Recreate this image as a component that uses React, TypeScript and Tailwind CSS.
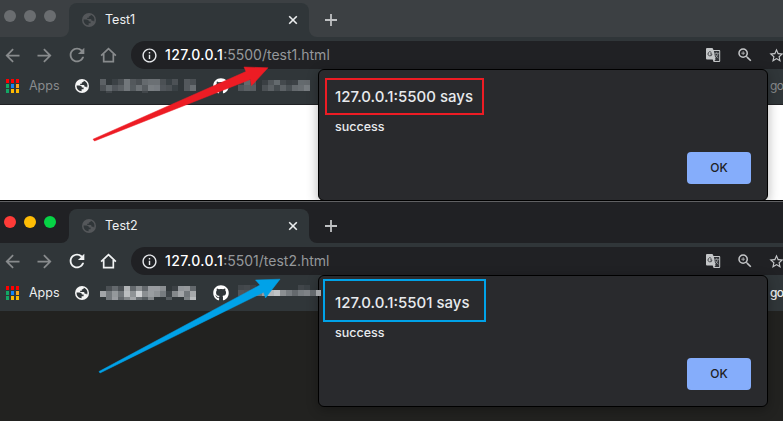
import type { ReactNode } from "react";
import { MdArrowBack, MdArrowForward, MdRefresh, MdInfoOutline, MdZoomIn, MdStarBorder } from "react-icons/md";
import { FaGithub } from "react-icons/fa";

function Globe({ ball, land, size }: { ball: string; land: string; size: number }) {
  return (
    <svg width={size} height={size} viewBox="0 0 14 14" className="shrink-0">
      <circle cx="7" cy="7" r="7" fill={ball} />
      <path d="M1.6 6.6H4.2C6 6.6 6.9 7.4 6.9 8.6H8.6V10.2H6.6V12.2C3.6 12.3 1.4 9.8 1.6 6.6Z" fill={land} />
      <path d="M8.8 1.8C8.8 3 8 3.4 6.8 3.4V4.8H5.2V6H8.6C9.4 6 9.6 6.8 9.6 7.8H11.2C11.8 7.8 11.9 8.4 11.9 9.2C13.3 6.2 12 2.8 8.8 1.8Z" fill={land} />
    </svg>
  );
}

function HomeIcon() {
  return (
    <svg width="17" height="18" viewBox="0 0 18 18" fill="none" stroke="currentColor" strokeWidth="1.8" className="shrink-0">
      <path d="M1.2 9.6 9 2.2l7.8 7.4M3.9 8v8h10.2V8" />
    </svg>
  );
}

function TranslateIcon() {
  return (
    <svg width="15" height="14" viewBox="0 0 15 14" className="shrink-0">
      <path d="M1 0h5.5l1 2H13.2a1 1 0 0 1 1 1v10a1 1 0 0 1-1 1H7.6l-.9-2.6H1a1 1 0 0 1-1-1V1a1 1 0 0 1 1-1Z" fill="#c4c6c8" />
      <path d="M7.9 3h5.3v10H8.4l1.1-1.6Z" fill="#303236" />
      <path d="M8.4 5.3h4.4M10.6 4.3v1M12 5.5c-.4 2-1.6 3.4-3 4.2M9.3 6.5c.6 1.4 1.6 2.5 3.1 3.6" stroke="#a5a7aa" strokeWidth=".8" fill="none" />
      <path d="M5.4 4.4a2 2 0 1 0 .6 1.5H4.1" stroke="#44464a" strokeWidth="1" fill="none" />
    </svg>
  );
}

const APP_COLORS = [
  "bg-[#f00]", "bg-[#f00]", "bg-[#f00]",
  "bg-[#12a765]", "bg-[#1683f5]", "bg-[#fba51b]",
  "bg-[#12a765]", "bg-[#fdb900]", "bg-[#fdb900]",
];

function AppsGrid() {
  return (
    <div className="grid w-[13px] shrink-0 grid-cols-3 gap-x-[2px] gap-y-[1px]">
      {APP_COLORS.map((c, i) => (
        <span key={i} className={`h-[4px] w-[3px] ${c}`} />
      ))}
    </div>
  );
}

type Row = { y: number; h: number; cells: string[] };

function Mosaic({ rows, width }: { rows: Row[]; width: number }) {
  return (
    <svg width={width} height="16" className="block shrink-0 overflow-visible" shapeRendering="crispEdges">
      {rows.map((r) =>
        r.cells.map((c, i) =>
          c === "-" ? null : <rect key={`${r.y}-${i}`} x={i * 6} y={r.y} width={i === 13 && width === 84 ? 5 : 6} height={r.h} fill={`#${c}`} />
        )
      )}
    </svg>
  );
}

const DIM_A: Row[] = [
  { y: 1, h: 6, cells: "5c6165 - 3b4145 4a4f53 72777b 53585c 4a4f53 656a6e 6b7074 6b7074 4b5054 394044 4c5155 - 53585c 4b5054".split(" ") },
  { y: 7, h: 6, cells: "4b5054 646a6e 50555a 5b6064 72777b 555b5f 6c7175 575c60 797e82 767b80 50555a 4b5054 394044 - 54595d 696e72".split(" ") },
  { y: 13, h: 2, cells: "- 41464a - - - - - 41464a - - - - - - - -".split(" ") },
];
const DIM_B: Row[] = [
  { y: 2, h: 5, cells: "3c4145 64696d 50555a - 3a3f43 51565a 646a6e 44494d 3a3f43 3d4246 646a6e 64696d".split(" ") },
  { y: 7, h: 6, cells: "50555a 5b6064 575c60 - 4b5054 5b6064 454b4f 5c6165 494f53 64696d 696e72 777c80".split(" ") },
];
const LIT_A: Row[] = [
  { y: 1, h: 5, cells: "- 4b5054 64696d 4b5054 b1b4b6 64696d 8b8f92 64696d 999ca0 999ca0 8b8f92 - 3c4145 92969a 96999c 64696d".split(" ") },
  { y: 6, h: 6, cells: "a2a5a8 73787c 94989b 72777b bbbec0 8f9396 cfd1d3 8a8e91 9a9ea1 8f9396 777c80 3e4448 84888b a2a5a8 73787c a5a8aa".split(" ") },
  { y: 12, h: 3, cells: "- 73787c 999ca0 62676b 84888b a2a5a8 6b7074 555b5f 84888b - - 555b5f - - 7c8184 b8bbbd".split(" ") },
];
const LIT_B: Row[] = [
  { y: 0, h: 6, cells: "41464a 44494d 3c4145 - - - - - - - 41464a 3b4145 - -".split(" ") },
  { y: 5, h: 6, cells: "50555a 4d5256 64696d 73787c 999ca0 b5b8ba c1c4c6 8b8f92 777c80 64696d 777c80 7e8286 64696d a2a5a8".split(" ") },
];

type WindowProps = {
  active: boolean;
  title: string;
  port: string;
  path: string;
  first: Row[];
  second: Row[];
  children?: ReactNode;
};

function BrowserWindow({ active, title, port, path, first, second, children }: WindowProps) {
  const strip = active ? "h-[41px] bg-[#202124]" : "h-[37px] bg-[#3c4043]";
  const curve = active ? "bg-[#202124]" : "bg-[#3c4043]";
  const dots = active ? ["bg-[#ff3b38]", "bg-[#ffbd05]", "bg-[#06d345]"] : ["bg-[#6a6d70]", "bg-[#6a6d70]", "bg-[#6a6d70]"];
  const dim = "text-[#888b8d]";
  const nav = active ? "text-[#f1f3f4]" : dim;
  return (
    <>
      <div className={`flex shrink-0 items-end ${strip}`}>
        <div className="flex h-[34px] w-[69px] items-start gap-2 pl-1 pt-[7px]">
          {dots.map((d, i) => <span key={i} className={`size-3 rounded-full ${d}`} />)}
        </div>
        <div className="relative flex h-[34px] w-[240px] items-center rounded-t-lg bg-[#303639] pl-[13px] pr-[10px]">
          <span className="absolute -left-2 bottom-0 size-2 bg-[#303639]"><i className={`block size-2 rounded-br-lg ${curve}`} /></span>
          <span className="absolute -right-2 bottom-0 size-2 bg-[#303639]"><i className={`block size-2 rounded-bl-lg ${curve}`} /></span>
          <Globe ball="#54575a" land="#303639" size={14} />
          <span className="ml-[9px] flex-1 text-[12.5px] leading-4 text-[#eef0f1]">{title}</span>
          <svg width="12" height="12" viewBox="0 0 12 12" stroke="#eceeef" strokeWidth="1.6"><path d="m2.2 2.2 7.6 7.6m0-7.6-7.6 7.6" /></svg>
        </div>
        <div className="flex h-[34px] items-center pl-[16px]">
          <svg width="12" height="12" viewBox="0 0 12 12" stroke="#bfc1c3" strokeWidth="1.8"><path d="M6 0v12M0 6h12" /></svg>
        </div>
      </div>
      <div className="flex h-9 shrink-0 items-center bg-[#303639] pl-[2px]">
        <MdArrowBack size={21} className={`shrink-0 ${dim}`} />
        <MdArrowForward size={21} className={`ml-[11px] shrink-0 ${dim}`} />
        <MdRefresh size={22} className={`ml-[11px] shrink-0 ${nav}`} />
        <span className={`ml-[12px] shrink-0 ${nav}`}><HomeIcon /></span>
        <div className="ml-[14px] flex h-7 w-[670px] shrink-0 items-center rounded-l-full bg-[#202124] pl-[10px]">
          <MdInfoOutline size={17} className="shrink-0 text-[#e8eaed]" />
          <p className="ml-[7px] w-[541px] shrink-0 whitespace-nowrap text-[14px] leading-5 text-[#95989b]">
            <span className="font-medium tracking-[0.4px] text-white">127.0.0.1</span>:{port}/{path}
          </p>
          <TranslateIcon />
          <MdZoomIn size={18} className="ml-[15px] shrink-0 text-[#c4c6c8]" />
          <MdStarBorder size={17} className="ml-[14px] shrink-0 text-[#c4c6c8]" />
        </div>
      </div>
      <div className={`flex h-8 shrink-0 items-center bg-[#303639] pb-[5px] pl-[6px] ${active ? "" : "border-b border-[#202124]"}`}>
        <AppsGrid />
        <span className={`ml-[10px] w-[46px] shrink-0 text-[12.5px] leading-4 ${active ? "text-[#eceeef]" : dim}`}>Apps</span>
        <Globe ball="#f5f6f6" land="#303639" size={14} />
        <div className="ml-[11px] w-[113px] shrink-0"><Mosaic rows={first} width={96} /></div>
        <FaGithub size={16} className="shrink-0 text-white" />
        <div className={`ml-[9px] w-[532px] shrink-0 ${active ? "z-10" : ""}`}><Mosaic rows={second} width={84} /></div>
        <span className={`whitespace-nowrap text-[12px] leading-4 tracking-[-0.6px] ${active ? "font-medium text-[#eceeef]" : dim}`}>go</span>
      </div>
      {children}
    </>
  );
}

function AlertDialog({ port, place, frame, header }: { port: string; place: string; frame: string; header: string }) {
  return (
    <section className={`absolute left-[318px] w-[450px] rounded-md border border-black bg-[#292a2d] shadow-[0_3px_12px_rgba(0,0,0,0.3)] ${place}`}>
      <h2 className={`absolute whitespace-nowrap border-2 text-[15px] font-medium leading-5 text-[#e8eaed] ${frame} ${header}`}>127.0.0.1:{port} says</h2>
      <div className="flex h-full flex-col justify-between pb-[16px] pl-4 pr-4 pt-[49px]">
        <p className="text-[12.5px] font-medium leading-4 text-[#e8eaed]">success</p>
        <button className="h-8 w-16 self-end rounded-[4px] bg-[#85adfb] text-[12px] font-medium text-[#202124]">OK</button>
      </div>
    </section>
  );
}

export default function App() {
  return (
    <main className="relative h-[421px] w-[783px] overflow-hidden bg-[#222220] font-['Inter','Liberation_Sans',sans-serif]">
      <div className="relative flex h-[200px] flex-col overflow-hidden bg-white">
        <BrowserWindow active={false} title="Test1" port="5500" path="test1.html" first={DIM_A} second={DIM_B}>
          <AlertDialog port="5500" place="top-[69px] h-[132px]" frame="left-[6px] top-[8px] h-[37px] w-[159px] border-[#ed1c24]" header="pl-[8px] pt-[7px]" />
        </BrowserWindow>
      </div>
      <div className="relative flex h-[221px] flex-col overflow-hidden border-t border-black bg-[#222220]">
        <div className="h-px shrink-0 bg-[#606163]" />
        <BrowserWindow active title="Test2" port="5501" path="test2.html" first={LIT_A} second={LIT_B}>
          <AlertDialog port="5501" place="top-[74px] h-[132px]" frame="left-[4px] top-[3px] h-[43px] w-[163px] border-[#00a2e8]" header="pl-[10px] pt-[12px]" />
        </BrowserWindow>
      </div>
      <svg className="pointer-events-none absolute inset-0 z-20" width="783" height="421" viewBox="0 0 783 421">
        <path d="M93 139.2 246 71.5 244 67l24 .8-16.5 18-1.2-6.3L94.5 141Z" fill="#ed1c24" stroke="#ed1c24" strokeWidth=".5" strokeLinejoin="round" />
        <path d="M99 371.5 260 285l-4.5-5 24.5-.8L265.5 298l-1.8-5.8L100 373Z" fill="#00a2e8" stroke="#00a2e8" strokeWidth=".5" strokeLinejoin="round" />
      </svg>
    </main>
  );
}
